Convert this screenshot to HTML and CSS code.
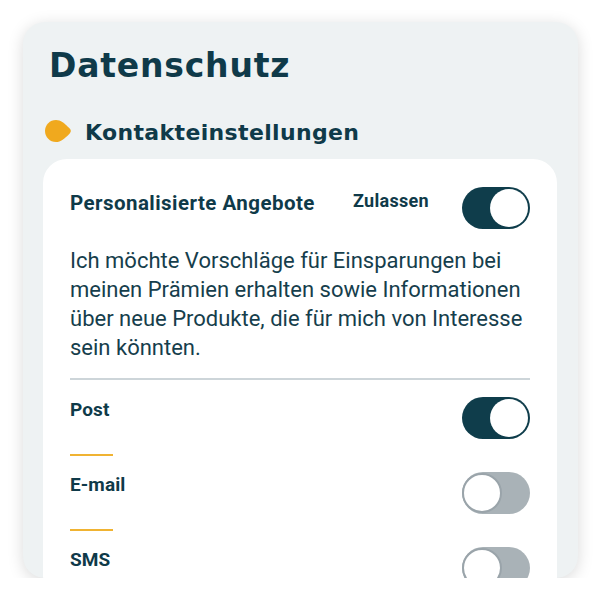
FILE: index.html
```html
<!DOCTYPE html>
<html lang="de">
<head>
<meta charset="utf-8">
<link rel="stylesheet" href="styles.css">
</head>
<body>
<div class="card">
  <h1 class="title">Datenschutz</h1>
  <div class="section">
    <svg class="blob" width="27" height="22" viewBox="0 0 27 22"><path d="M11 0C4.9 0 0 4.9 0 11s4.9 11 11 11c4.6 0 8.6-3.3 13.7-8.6a3.5 3.5 0 0 0 0-4.8C19.6 3.3 15.6 0 11 0z" fill="#f0a91e"/></svg>
    <h2 class="section-title">Kontakteinstellungen</h2>
  </div>
  <div class="panel">
    <div class="head-row">
      <div class="head-label">Personalisierte Angebote</div>
      <div class="allow">Zulassen</div>
      <div class="toggle on"><span class="knob"></span></div>
    </div>
    <p class="desc">Ich möchte Vorschläge für Einsparungen bei meinen Prämien erhalten sowie Informationen über neue Produkte, die für mich von Interesse sein könnten.</p>
    <div class="divider"></div>
    <div class="row">
      <div class="row-label">Post</div>
      <div class="toggle on"><span class="knob"></span></div>
    </div>
    <div class="accent"></div>
    <div class="row">
      <div class="row-label">E-mail</div>
      <div class="toggle off"><span class="knob"></span></div>
    </div>
    <div class="accent"></div>
    <div class="row">
      <div class="row-label">SMS</div>
      <div class="toggle off"><span class="knob"></span></div>
    </div>
  </div>
</div>
</body>
</html>
```
FILE: styles.css
```css
html, body {
  margin: 0;
  padding: 0;
  background: #ffffff;
}
body {
  padding: 22px 22px 0 23px;
  font-family: Roboto, "Liberation Sans", sans-serif;
  color: #0f3a49;
}
.card {
  height: 556px;
  background: #eef2f3;
  border-radius: 22px;
  box-shadow: 0 3px 16px rgba(0, 0, 0, 0.15);
  overflow: hidden;
  display: flex;
  flex-direction: column;
}
.title {
  margin: 0;
  padding: 24px 0 0 26px;
  font-family: "DejaVu Sans", sans-serif;
  font-weight: bold;
  font-size: 33px;
  line-height: 40px;
  letter-spacing: 0.8px;
  color: #0f3a49;
}
.section {
  display: flex;
  align-items: flex-start;
  gap: 13px;
  margin: 32px 0 0 22px;
}
.blob {
  display: block;
  flex: none;
  margin-top: 2px;
}
.section-title {
  margin: 0;
  font-family: "DejaVu Sans", sans-serif;
  font-weight: bold;
  font-size: 22px;
  line-height: 30px;
  letter-spacing: 0.35px;
  color: #0f3a49;
}
.panel {
  flex: 1;
  margin: 11px 21px 0 20px;
  background: #ffffff;
  border-radius: 24px 24px 0 0;
  padding: 28px 27px 0 27px;
}
.head-row {
  display: flex;
  align-items: flex-start;
}
.head-label {
  flex: 1;
  font-weight: bold;
  font-size: 20.5px;
  line-height: 24px;
  letter-spacing: 0.45px;
  margin-top: 4px;
}
.allow {
  font-weight: bold;
  font-size: 18px;
  line-height: 22px;
  letter-spacing: 0.3px;
  margin: 3px 33px 0 0;
}
.toggle {
  position: relative;
  width: 68px;
  height: 42px;
  border-radius: 21px;
  box-sizing: border-box;
  flex: none;
}
.toggle.on {
  background: #0f3d4b;
}
.toggle.off {
  background: #a9b2b7;
}
.knob {
  position: absolute;
  border-radius: 50%;
  background: #ffffff;
  box-sizing: border-box;
}
.toggle.on .knob {
  top: 2px;
  right: 2px;
  width: 38px;
  height: 38px;
}
.toggle.off .knob {
  top: 1px;
  left: 0;
  width: 40px;
  height: 40px;
  border: 2px solid #9aa4aa;
}
.desc {
  margin: 17px 0 0 0;
  font-size: 22px;
  line-height: 29px;
  color: #163e4c;
}
.divider {
  height: 2px;
  background: #cdd5d9;
  margin-top: 16px;
}
.row {
  display: flex;
  justify-content: space-between;
  align-items: flex-start;
  margin-top: 17px;
}
.row-label {
  font-weight: bold;
  font-size: 19px;
  line-height: 24px;
  letter-spacing: 0.1px;
  margin-top: 1px;
}
.accent {
  width: 43px;
  height: 2px;
  background: #f0b332;
  margin-top: 15px;
}
.accent + .row {
  margin-top: 16px;
}
```
